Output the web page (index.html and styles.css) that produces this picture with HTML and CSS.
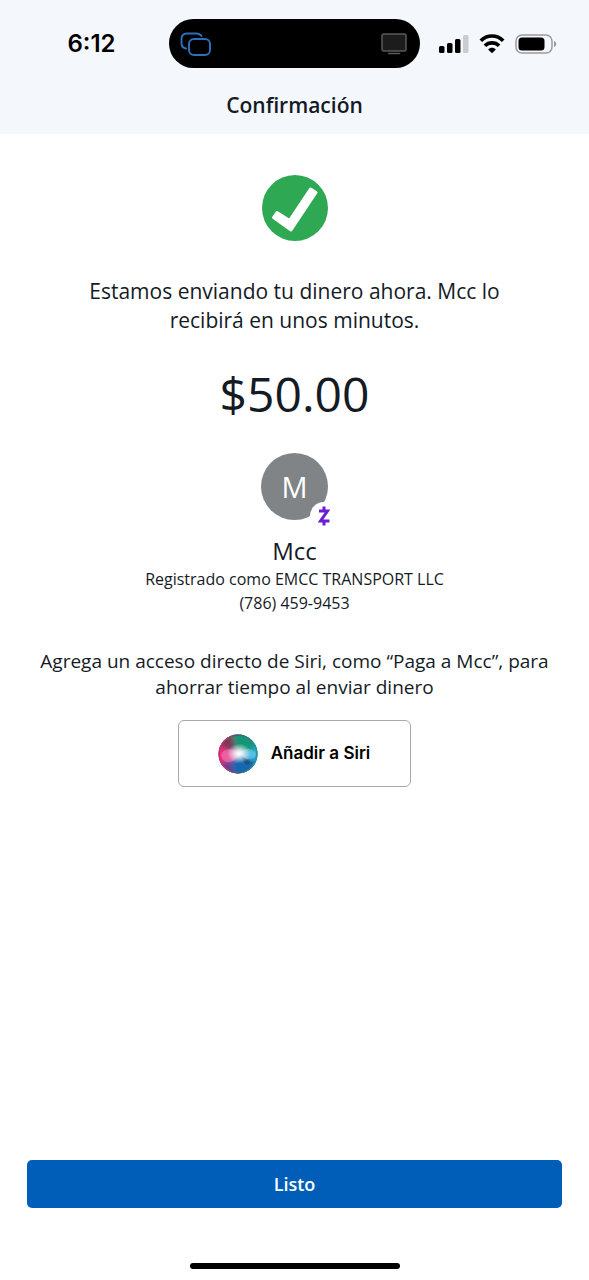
FILE: index.html
```html
<!DOCTYPE html>
<html lang="es">
<head>
<meta charset="utf-8">
<meta name="viewport" content="width=device-width, initial-scale=1">
<title>Confirmación</title>
<link rel="stylesheet" href="styles.css">
</head>
<body>
<header class="top">
  <div class="status">
    <time class="clock">6:12</time>
    <div class="island">
      <svg width="32" height="24" viewBox="0 0 32 24" fill="none" stroke="#2c6fba" stroke-width="2" stroke-linecap="round" aria-hidden="true">
        <path d="M6 16.500C3 16 1.500 14 1.500 11V7C1.500 3.500 3.500 1.500 7 1.500H16C19 1.500 20.500 2.500 21.500 4"/>
        <rect x="9" y="7" width="21" height="16" rx="5"/>
      </svg>
      <svg width="28" height="22" viewBox="0 0 28 22" fill="none" aria-hidden="true">
        <rect x="2" y="1" width="24" height="17" rx="2" fill="#1c1c1c" stroke="#5a5a5a" stroke-width="1.500"/>
        <path d="M8.500 20.500H19.500" stroke="#5a5a5a" stroke-width="1.500" stroke-linecap="round"/>
      </svg>
    </div>
    <div class="signals">
      <svg width="30" height="20" viewBox="0 0 30 20" aria-hidden="true">
        <rect x="0" y="12" width="5.500" height="7" rx="1.500"/>
        <rect x="8" y="9" width="5.500" height="10" rx="1.500"/>
        <rect x="16" y="5" width="5.500" height="14" rx="1.500"/>
        <rect x="24" y="1" width="5.500" height="18" rx="1.500" fill="#cbcccf"/>
      </svg>
      <svg width="26" height="20" viewBox="0 0 26 20" fill="none" stroke="#000" stroke-width="3.600" aria-hidden="true">
        <path d="M1.800 6.800C8 .3 18 .3 24.200 6.800"/>
        <path d="M5.900 11.800C9.900 7.900 16.100 7.900 20.100 11.800"/>
        <path d="M13 19.200L9.100 15.400C11.200 13.300 14.800 13.300 16.900 15.400Z" fill="#000" stroke="none"/>
      </svg>
      <svg width="42" height="20" viewBox="0 0 42 20" aria-hidden="true">
        <rect x="1" y="1" width="36" height="18" rx="6" fill="none" stroke="#9a9b9e" stroke-width="1.500"/>
        <rect x="3.500" y="3.500" width="26" height="13" rx="3.500"/>
        <path d="M39 7C42 8 42 12 39 13Z" fill="#9a9b9e"/>
      </svg>
    </div>
  </div>
  <h1 class="title">Confirmación</h1>
</header>

<main class="content">
  <svg class="check" viewBox="0 0 66 66" role="img" aria-label="Enviado">
    <circle cx="33" cy="33" r="33" fill="#2ea853"/>
    <path d="M11.500 42.500L15 37.500L27.500 45.500L48.500 14L54 17.500L29 55Z" fill="#fff" stroke="#fff" stroke-width="3" stroke-linejoin="round"/>
  </svg>
  <p class="message">Estamos enviando tu dinero ahora. Mcc lo recibirá en unos minutos.</p>
  <p class="amount">$50.00</p>
  <div class="avatar">M
    <span class="badge">
      <svg width="12" height="20" viewBox="0 0 12 20" fill="none" stroke="#6d1ed4" stroke-width="3" aria-hidden="true">
        <path d="M1 5H9.500L2.500 15H11.500"/>
        <path d="M6 .5V5M6 15V19.500"/>
      </svg>
    </span>
  </div>
  <h2 class="name">Mcc</h2>
  <p class="detail">Registrado como EMCC TRANSPORT LLC</p>
  <p class="detail">(786) 459-9453</p>
  <p class="hint">Agrega un acceso directo de Siri, como “Paga a Mcc”, para ahorrar tiempo al enviar dinero</p>
  <button class="siri" type="button">
    <svg width="40" height="40" viewBox="0 0 40 40" aria-hidden="true">
      <defs>
        <clipPath id="orb"><circle cx="20" cy="20" r="19.500"/></clipPath>
        <filter id="soft" x="-30%" y="-30%" width="160%" height="160%"><feGaussianBlur stdDeviation="2.500"/></filter>
        <radialGradient id="glow">
          <stop offset="0" stop-color="#fff"/>
          <stop offset=".3" stop-color="#fff" stop-opacity=".8"/>
          <stop offset="1" stop-color="#fff" stop-opacity="0"/>
        </radialGradient>
        <linearGradient id="rim" x2="1" y2="0">
          <stop offset="0" stop-color="#d72a75"/>
          <stop offset=".5" stop-color="#466073"/>
          <stop offset="1" stop-color="#1c9a9f"/>
        </linearGradient>
      </defs>
      <g clip-path="url(#orb)">
        <rect width="40" height="40" fill="#285a86"/>
        <g filter="url(#soft)">
          <path d="M12 -4H44V17L20 18Z" fill="#189676"/>
          <path d="M-4 -4H12L17 14L-4 14Z" fill="#84364f"/>
          <path d="M-4 11L20 18L12 30L-4 32Z" fill="#eb3183"/>
          <path d="M20 20L44 13V30Z" fill="#36b5e2"/>
          <path d="M20 20L40 30L30 44H10L6 34Z" fill="#1267ae"/>
          <path d="M-4 31L13 27L16 44H-4Z" fill="#693b91"/>
        </g>
        <path d="M3 22C5 13 15 14 22 20C15 30 6 31 3 22Z" fill="#f5b2d0" fill-opacity=".35"/>
        <path d="M20 20C27 12 36 15 38 20C35 28 27 26 20 20Z" fill="#9be5ff" fill-opacity=".3"/>
        <path d="M21 20L34 29L28 31Z" fill="#244461" fill-opacity=".6"/>
        <ellipse cx="21" cy="19.500" rx="12" ry="10" fill="url(#glow)"/>
      </g>
      <circle cx="20" cy="20" r="18.800" fill="none" stroke="url(#rim)" stroke-width="1.500"/>
    </svg>
    Añadir a Siri
  </button>
</main>

<footer class="bottom">
  <button class="done" type="button">Listo</button>
  <div class="home"></div>
</footer>
</body>
</html>
```
FILE: styles.css
```css
* {
  box-sizing: border-box;
}

body {
  margin: 0;
  min-height: 100vh;
  display: flex;
  flex-direction: column;
  background: #fff;
  color: #141b25;
  font-family: "Open Sans", "Noto Sans", sans-serif;
}

h1, h2, p {
  margin: 0;
  font-weight: 400;
}

button {
  cursor: pointer;
}

svg {
  display: block;
  flex: none;
}

.top {
  padding: 19px 0 14px;
  background: #f4f7fc;
}

.status {
  display: grid;
  grid-template-columns: 1fr 251px 1fr;
  align-items: center;
}

.clock {
  padding-left: 14px;
  text-align: center;
  color: #000;
  font: 600 24px/28px Inter, sans-serif;
}

.island {
  display: flex;
  align-items: center;
  justify-content: space-between;
  height: 49px;
  padding: 0 12px 0 11px;
  border-radius: 25px;
  background: #000;
}

.signals {
  display: flex;
  justify-content: center;
  gap: 10px;
  padding-right: 14px;
}

.title {
  margin-top: 22px;
  text-align: center;
  font-size: 21px;
  font-weight: 600;
  line-height: 30px;
}

.content {
  flex: 1;
  display: flex;
  flex-direction: column;
  align-items: center;
  padding: 41px 32px 32px;
  text-align: center;
}

.check {
  width: 66px;
  height: 66px;
}

.message {
  max-width: 440px;
  margin-top: 36px;
  font-size: 21px;
  line-height: 29px;
}

.amount {
  margin-top: 29px;
  font-size: 48px;
  line-height: 60px;
}

.avatar {
  position: relative;
  width: 67px;
  height: 67px;
  margin-top: 29px;
  border-radius: 50%;
  background: #808487;
  color: #fff;
  font-size: 29px;
  line-height: 67px;
}

.badge {
  position: absolute;
  right: -10px;
  bottom: -10px;
  display: grid;
  place-items: center;
  width: 28px;
  height: 28px;
  border-radius: 50%;
  background: #fff;
}

.name {
  margin-top: 16px;
  font-size: 24px;
  line-height: 30px;
}

.detail {
  font-size: 16px;
  line-height: 24px;
}

.name + .detail {
  margin-top: 1px;
}

.hint {
  margin-top: 33px;
  font-size: 19px;
  line-height: 26px;
}

.siri {
  display: flex;
  align-items: center;
  gap: 13px;
  margin-top: 20px;
  padding: 12px 40px 12px 39px;
  border: 1px solid #a9a9ab;
  border-radius: 6px;
  background: #fff;
  color: #000;
  font: 600 17px/41px Inter, sans-serif;
}

.bottom {
  display: flex;
  flex-direction: column;
  align-items: center;
  padding: 0 27px 11px;
}

.done {
  width: 100%;
  padding: 9px;
  border: 0;
  border-radius: 5px;
  background: #005eb8;
  color: #fff;
  font: 600 18px/30px "Open Sans", "Noto Sans", sans-serif;
}

.home {
  width: 210px;
  height: 6px;
  margin-top: 55px;
  border-radius: 3px;
  background: #000;
}
```
